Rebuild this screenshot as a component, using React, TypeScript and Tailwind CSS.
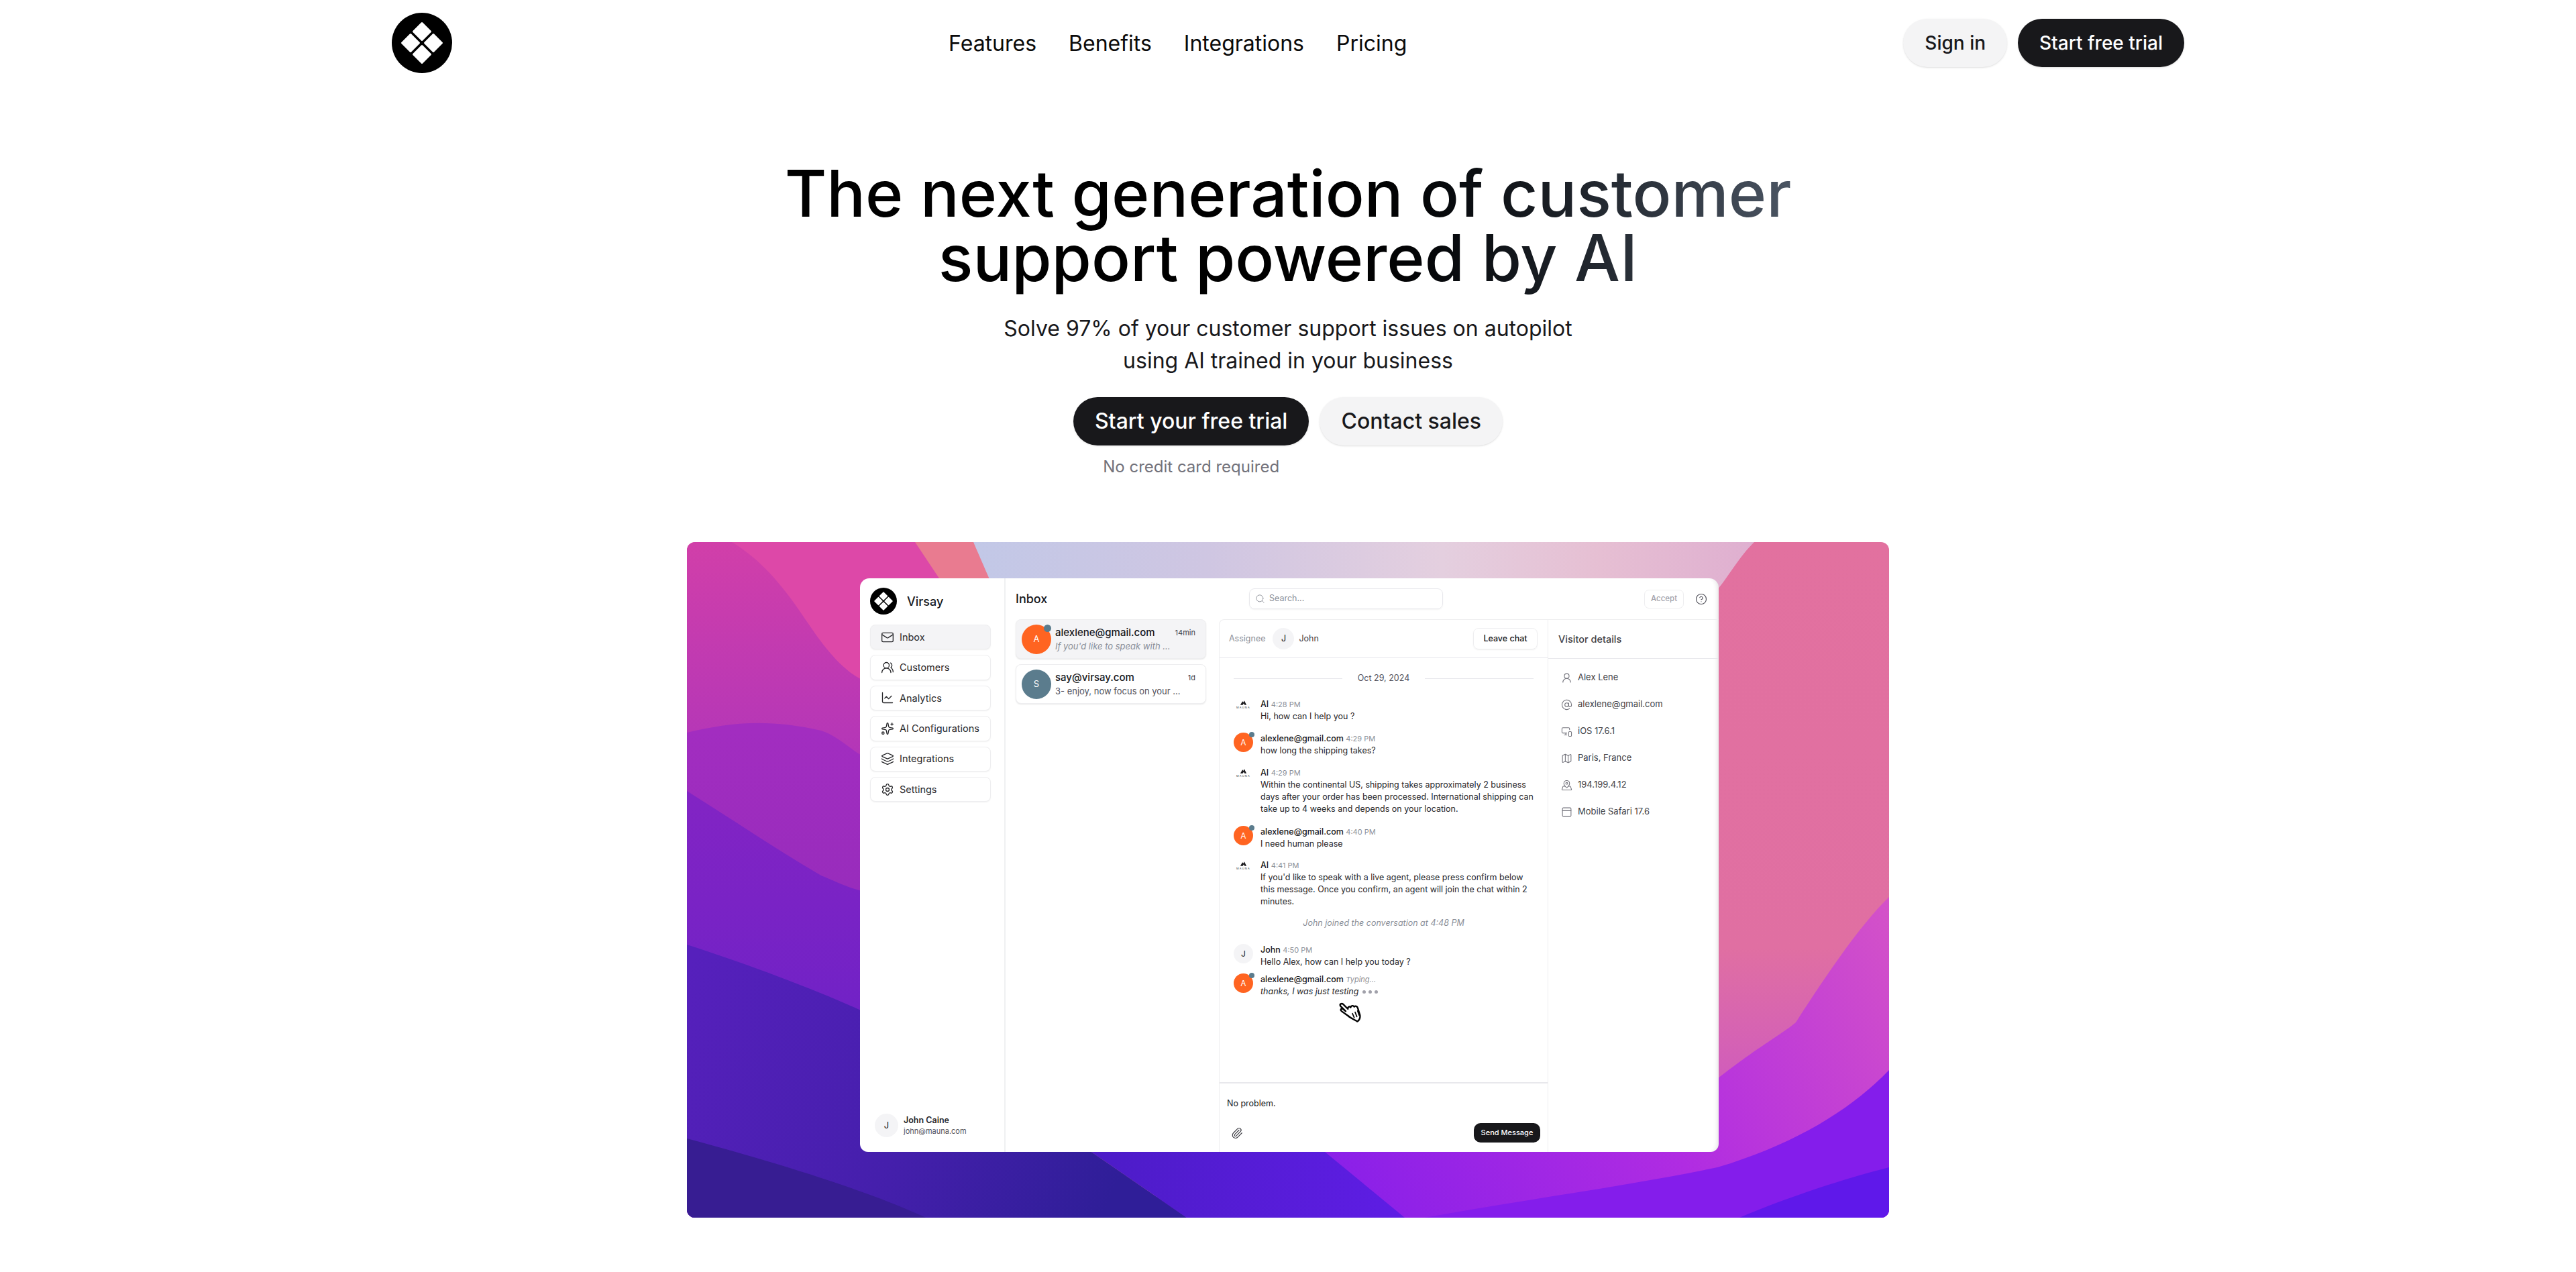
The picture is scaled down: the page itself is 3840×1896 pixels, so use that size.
import {
  AtSign,
  ChartLine,
  CircleHelp,
  Layers,
  Mail,
  Map,
  MapPinned,
  MonitorSmartphone,
  PanelTop,
  Paperclip,
  Search,
  Settings,
  Sparkles,
  UserRound,
  UsersRound,
} from 'lucide-react';
import type { ReactNode } from 'react';

function Logo({ className }: { className: string }) {
  return (
    <svg viewBox="0 0 90 90" className={className}>
      <circle cx="45" cy="45" r="45" fill="#000" />
      <g fill="#fff" stroke="#fff" strokeWidth="3" strokeLinejoin="round">
        <polygon points="45,15.5 57.5,28 45,40.5 32.5,28" />
        <polygon points="45,49.5 57.5,62 45,74.5 32.5,62" />
        <polygon points="28,32.5 40.5,45 28,57.5 15.5,45" />
        <polygon points="62,32.5 74.5,45 62,57.5 49.5,45" />
      </g>
    </svg>
  );
}

function HandCursor({ className }: { className: string }) {
  return (
    <svg viewBox="0 0 150 150" className={className}>
      <path
        d="M24 58C20 50 30 45 36 50L58 72C56 62 66 58 70 65C72 56 82 55 86 62C90 56 100 60 102 68L112 100C114 112 108 122 100 128C90 122 70 112 58 102L30 82C22 76 28 66 36 72L48 82Z"
        fill="#fff"
        stroke="#000"
        strokeWidth="7"
        strokeLinejoin="round"
      />
      <path d="M78 92L86 110M90 86L98 106M101 80L108 100" stroke="#000" strokeWidth="5" strokeLinecap="round" />
    </svg>
  );
}

function Wallpaper() {
  return (
    <svg viewBox="0 0 1792 1007" preserveAspectRatio="none" className="absolute inset-0 h-full w-full">
      <defs>
        <linearGradient id="pink" x1="0" y1="0" x2="0" y2="1">
          <stop offset="0" stopColor="#e2719f" />
          <stop offset="0.6" stopColor="#e06fa2" />
          <stop offset="0.8" stopColor="#d05cbc" />
        </linearGradient>
        <linearGradient id="sky" gradientUnits="userSpaceOnUse" x1="427" y1="0" x2="1591" y2="0">
          <stop offset="0" stopColor="#c2c8e7" />
          <stop offset="0.3" stopColor="#cfc6e2" />
          <stop offset="0.6" stopColor="#e4cfdf" />
          <stop offset="0.8" stopColor="#e6bfd3" />
          <stop offset="1" stopColor="#dfafd0" />
        </linearGradient>
        <linearGradient id="l1" gradientUnits="userSpaceOnUse" x1="0" y1="0" x2="0" y2="320">
          <stop offset="0" stopColor="#d13fa9" />
          <stop offset="1" stopColor="#b336b8" />
        </linearGradient>
        <linearGradient id="l2" gradientUnits="userSpaceOnUse" x1="0" y1="280" x2="0" y2="520">
          <stop offset="0" stopColor="#a22dc0" />
          <stop offset="1" stopColor="#982cbc" />
        </linearGradient>
        <linearGradient id="l3" gradientUnits="userSpaceOnUse" x1="0" y1="380" x2="0" y2="700">
          <stop offset="0" stopColor="#8224c4" />
          <stop offset="1" stopColor="#7122c6" />
        </linearGradient>
        <linearGradient id="l4" gradientUnits="userSpaceOnUse" x1="0" y1="640" x2="640" y2="960">
          <stop offset="0" stopColor="#5620bc" />
          <stop offset="0.55" stopColor="#451fac" />
          <stop offset="1" stopColor="#2f1e98" />
        </linearGradient>
        <linearGradient id="r1" gradientUnits="userSpaceOnUse" x1="1000" y1="1000" x2="1792" y2="540">
          <stop offset="0" stopColor="#8a20e8" />
          <stop offset="0.5" stopColor="#b02ce2" />
          <stop offset="1" stopColor="#d452c8" />
        </linearGradient>
        <linearGradient id="mid" gradientUnits="userSpaceOnUse" x1="620" y1="0" x2="1060" y2="0">
          <stop offset="0" stopColor="#4d1cc8" />
          <stop offset="1" stopColor="#5e1de4" />
        </linearGradient>
      </defs>
      <rect width="1792" height="1007" fill="url(#pink)" />
      <path d="M427 0H1591C1570 20 1550 55 1536 71V120H453Z" fill="url(#sky)" />
      <path d="M332 0H427L453 60V120H397Z" fill="#e97b90" />
      <path d="M60 0H340L400 90V300H257Z" fill="#dd48a8" />
      {/* right side layers */}
      <path d="M1792 529C1760 560 1719 613 1653 716C1630 735 1603 748 1536 800H700V1007H1792Z" fill="url(#r1)" />
      <path d="M1792 787C1736 845 1653 897 1536 932C1400 960 1250 980 1100 1007H1792Z" fill="#841deb" />
      <path d="M1792 932C1703 955 1620 985 1569 1007H1792Z" fill="#5f18ea" />
      <path d="M603 909H951L1070 1007H745Z" fill="url(#mid)" />
      {/* left side layers */}
      <path d="M0 0H67C100 20 133 50 173 110C200 150 225 185 257 203L320 240V1007H0Z" fill="url(#l1)" />
      <path d="M0 284C60 270 117 262 200 281C220 287 240 305 257 316L330 350V1007H0Z" fill="url(#l2)" />
      <path d="M0 371C67 413 133 458 200 497C220 505 240 515 257 519L350 545V1007H0Z" fill="url(#l3)" />
      <path d="M0 600C100 632 200 671 257 697L500 800L603 909L745 1007H0Z" fill="url(#l4)" />
      <path d="M0 889C100 916 257 961 356 1007H0Z" fill="#371d92" />
    </svg>
  );
}

const navItems = [
  { label: 'Inbox', icon: <Mail className="h-[20px] w-[20px]" strokeWidth={1.6} />, active: true },
  { label: 'Customers', icon: <UsersRound className="h-[20px] w-[20px]" strokeWidth={1.6} /> },
  { label: 'Analytics', icon: <ChartLine className="h-[20px] w-[20px]" strokeWidth={1.6} /> },
  { label: 'AI Configurations', icon: <Sparkles className="h-[20px] w-[20px]" strokeWidth={1.6} /> },
  { label: 'Integrations', icon: <Layers className="h-[20px] w-[20px]" strokeWidth={1.6} /> },
  { label: 'Settings', icon: <Settings className="h-[20px] w-[20px]" strokeWidth={1.6} /> },
];

const visitorRows = [
  { label: 'Alex Lene', icon: <UserRound className="h-[17px] w-[17px]" strokeWidth={1.5} /> },
  { label: 'alexlene@gmail.com', icon: <AtSign className="h-[17px] w-[17px]" strokeWidth={1.5} /> },
  { label: 'iOS 17.6.1', icon: <MonitorSmartphone className="h-[17px] w-[17px]" strokeWidth={1.5} /> },
  { label: 'Paris, France', icon: <Map className="h-[17px] w-[17px]" strokeWidth={1.5} /> },
  { label: '194.199.4.12', icon: <MapPinned className="h-[17px] w-[17px]" strokeWidth={1.5} /> },
  { label: 'Mobile Safari 17.6', icon: <PanelTop className="h-[17px] w-[17px]" strokeWidth={1.5} /> },
];

function OrangeAvatar() {
  return (
    <div className="relative flex h-[29px] w-[29px] shrink-0 items-center justify-center rounded-full bg-[#ff6421] text-[12px] text-white">
      A
      <span className="absolute -top-[1px] right-[-2px] h-[8px] w-[8px] rounded-full bg-[#5b7c8d]" />
    </div>
  );
}

function MaunaMark() {
  return (
    <div className="flex h-[29px] w-[29px] shrink-0 flex-col items-center pt-[2px]">
      <svg viewBox="0 0 12 8" className="h-[8px] w-[11px]">
        <path d="M1 8L4.5 2L6 4L7.5 1L11 8H8L6.5 5.5L5 8Z" fill="#1a1a1e" />
      </svg>
      <span className="mt-[1px] text-[4px] leading-[5px] tracking-[1.2px] text-[#333]">MAUNA</span>
    </div>
  );
}

function Message({
  avatar,
  name,
  time,
  children,
  className,
}: {
  avatar: ReactNode;
  name: string;
  time: ReactNode;
  children: ReactNode;
  className: string;
}) {
  return (
    <div className={`flex gap-[11px] ${className}`}>
      {avatar}
      <div className="text-[12.5px] leading-[18px] text-[#27272a]">
        <div>
          <span className="font-medium text-[#18181b]">{name}</span>{' '}
          <span className="text-[11px] text-[#8b8f98]">{time}</span>
        </div>
        {children}
      </div>
    </div>
  );
}

function AppWindow() {
  return (
    <div className="flex h-[855px] w-[1280px] overflow-hidden rounded-t-[14px] rounded-b-[12px] bg-white text-[#18181b] shadow-[inset_-7px_0_7px_-6px_rgba(0,0,0,0.14)]">
      <aside className="flex w-[217px] shrink-0 flex-col border-r-2 border-[#eff0f2] pb-[22px] pl-[15px] pr-[20px] pt-[14px]">
        <div className="flex items-center gap-[15px]">
          <Logo className="h-[40px] w-[40px]" />
          <span className="text-[18px] font-medium">Virsay</span>
        </div>
        <nav className="mt-[15px] flex flex-col gap-[8px]">
          {navItems.map((item) => (
            <div
              key={item.label}
              className={`flex h-[37.4px] items-center gap-[8px] rounded-[8px] border border-[#eeeef0] pl-[15px] text-[14.5px] text-[#27272a] shadow-[0_1px_2px_rgba(0,0,0,0.06)] ${item.active ? 'bg-[#f4f4f6]' : 'bg-white'}`}
            >
              {item.icon}
              {item.label}
            </div>
          ))}
        </nav>
        <div className="mt-auto flex items-center gap-[8px] pl-[7px]">
          <div className="flex h-[35px] w-[35px] items-center justify-center rounded-full bg-[#f4f4f6] text-[13px]">J</div>
          <div>
            <div className="text-[12.5px] font-semibold leading-[16px] text-[#27272a]">John Caine</div>
            <div className="text-[11px] leading-[16px] text-[#52525b]">john@mauna.com</div>
          </div>
        </div>
      </aside>
      <div className="flex min-w-0 flex-1 flex-col">
        <div className="flex h-[61px] shrink-0 items-center pl-[15px] pr-[17px]">
          <div className="w-[348px] text-[18px] font-medium">Inbox</div>
          <div className="flex h-[31px] w-[289px] items-center gap-[6px] rounded-[8px] border border-[#e8e8ec] pl-[8px] text-[12.5px] text-[#8b8f98] shadow-[0_1px_2px_rgba(0,0,0,0.05)]">
            <Search className="h-[15px] w-[15px]" strokeWidth={1.5} />
            Search...
          </div>
          <div className="ml-auto flex h-[28px] w-[59px] items-center justify-center rounded-[7px] border border-[#eeeef0] text-[11.5px] font-medium text-[#a1a1aa]">
            Accept
          </div>
          <CircleHelp className="ml-[17px] h-[18px] w-[18px] text-[#52525b]" strokeWidth={1.6} />
        </div>
        <div className="flex min-h-0 flex-1">
          <div className="flex w-[318px] shrink-0 flex-col gap-[8px] pl-[15px] pr-[19px]">
            <div className="flex h-[59px] items-center gap-[6px] rounded-[8px] border border-[#eeeef0] bg-[#f4f4f6] pl-[8px] pr-[15px] shadow-[0_1px_2px_rgba(0,0,0,0.1)]">
              <div className="relative flex h-[44px] w-[44px] shrink-0 items-center justify-center rounded-full bg-[#ff6421] text-[13px] text-white">
                A
                <span className="absolute right-0 top-0 h-[11px] w-[11px] rounded-full bg-[#5b7c8d]" />
              </div>
              <div className="min-w-0 flex-1">
                <div className="flex items-center justify-between text-[15px] font-medium leading-[20px]">
                  alexlene@gmail.com
                  <span className="text-[11px] font-normal text-[#3f3f46]">14min</span>
                </div>
                <div className="text-[13px] italic leading-[20px] text-[#8b8f98]">If you'd like to speak with ...</div>
              </div>
            </div>
            <div className="flex h-[59px] items-center gap-[6px] rounded-[8px] border border-[#eeeef0] bg-white pl-[8px] pr-[15px] shadow-[0_1px_2px_rgba(0,0,0,0.1)]">
              <div className="flex h-[44px] w-[44px] shrink-0 items-center justify-center rounded-full bg-[#5b7c8d] text-[13px] text-white">S</div>
              <div className="min-w-0 flex-1">
                <div className="flex items-center justify-between text-[15px] font-medium leading-[20px]">
                  say@virsay.com
                  <span className="text-[11px] font-normal text-[#3f3f46]">1d</span>
                </div>
                <div className="text-[13px] leading-[20px] text-[#52525b]">3- enjoy, now focus on your ...</div>
              </div>
            </div>
          </div>
          <section className="flex w-[490px] shrink-0 flex-col rounded-tl-[8px] border-l border-t border-[#eeeef0]">
            <div className="flex h-[57px] shrink-0 items-center border-b border-[#e8e8ec] pl-[14px] pr-[15px] text-[12.5px]">
              <span className="text-[#8b8f98]">Assignee</span>
              <div className="ml-[11px] flex h-[32px] w-[32px] items-center justify-center rounded-full bg-[#f4f4f6]">J</div>
              <span className="ml-[7px] text-[#3f3f46]">John</span>
              <div className="ml-auto flex h-[32px] w-[96px] items-center justify-center rounded-[8px] border border-[#eeeef0] font-medium shadow-[0_1px_2px_rgba(0,0,0,0.06)]">
                Leave chat
              </div>
            </div>
            <div className="min-h-0 flex-1 px-[21px] pt-[21px]">
              <div className="flex items-center gap-[23px] text-[12.5px] leading-[18px] text-[#52525b]">
                <span className="h-px flex-1 bg-[#e8e8ec]" />
                Oct 29, 2024
                <span className="h-px flex-1 bg-[#e8e8ec]" />
              </div>
              <Message className="mt-[21px]" avatar={<MaunaMark />} name="AI" time="4:28 PM">
                Hi, how can I help you ?
              </Message>
              <Message className="mt-[15px]" avatar={<OrangeAvatar />} name="alexlene@gmail.com" time="4:29 PM">
                how long the shipping takes?
              </Message>
              <Message className="mt-[15px]" avatar={<MaunaMark />} name="AI" time="4:29 PM">
                Within the continental US, shipping takes approximately 2 business days after your order has been processed. International shipping can take up to 4 weeks and depends on your location.
              </Message>
              <Message className="mt-[16px]" avatar={<OrangeAvatar />} name="alexlene@gmail.com" time="4:40 PM">
                I need human please
              </Message>
              <Message className="mt-[14px]" avatar={<MaunaMark />} name="AI" time="4:41 PM">
                If you'd like to speak with a live agent, please press confirm below this message. Once you confirm, an agent will join the chat within 2 minutes.
              </Message>
              <div className="mt-[14px] text-center text-[12.5px] italic leading-[18px] text-[#8b8f98]">
                John joined the conversation at 4:48 PM
              </div>
              <Message
                className="mt-[22px]"
                avatar={<div className="flex h-[29px] w-[29px] shrink-0 items-center justify-center rounded-full bg-[#f4f4f6] text-[12px]">J</div>}
                name="John"
                time="4:50 PM"
              >
                Hello Alex, how can I help you today ?
              </Message>
              <Message
                className="mt-[8px]"
                avatar={<OrangeAvatar />}
                name="alexlene@gmail.com"
                time={<i>Typing...</i>}
              >
                <div className="relative flex items-center gap-[6px] italic">
                  thanks, I was just testing
                  <span className="flex gap-[4px]">
                    <span className="h-[5px] w-[5px] rounded-full bg-[#a1a1aa]" />
                    <span className="h-[5px] w-[5px] rounded-full bg-[#a1a1aa]" />
                    <span className="h-[5px] w-[5px] rounded-full bg-[#a1a1aa]" />
                  </span>
                  <HandCursor className="absolute left-[111px] top-[11px] h-[50px] w-[50px]" />
                </div>
              </Message>
            </div>
            <div className="flex h-[104px] shrink-0 flex-col border-t-2 border-[#e8e8ec] pb-[14px] pl-[11px] pr-[11px] pt-[21px] text-[12.5px]">
              <span className="leading-[18px]">No problem.</span>
              <div className="mt-auto flex items-center justify-between">
                <Paperclip className="ml-[6px] h-[18px] w-[18px] text-[#3f3f46]" strokeWidth={1.6} />
                <div className="flex h-[29px] w-[99px] items-center justify-center rounded-[10px] bg-[#18181b] text-[11px] font-medium text-white">
                  Send Message
                </div>
              </div>
            </div>
          </section>
          <section className="flex-1 border-l border-t border-[#eeeef0]">
            <div className="flex h-[58px] items-center border-b border-[#e8e8ec] pl-[15px] text-[14.5px] font-medium text-[#3f3f46]">
              Visitor details
            </div>
            <div className="flex flex-col gap-[22px] pl-[19px] pt-[19px]">
              {visitorRows.map((row) => (
                <div key={row.label} className="flex h-[18px] items-center gap-[8px] text-[13px] text-[#3f3f46]">
                  <span className="text-[#71717a]">{row.icon}</span>
                  {row.label}
                </div>
              ))}
            </div>
          </section>
        </div>
      </div>
    </div>
  );
}

export default function App() {
  return (
    <div className="h-[1896px] overflow-hidden bg-white font-['Inter',sans-serif] text-[#0a0a0a]">
      <header className="mx-auto flex h-[128px] w-[2672px] items-center justify-between">
        <Logo className="h-[90px] w-[90px]" />
        <nav className="flex gap-[48px] pt-[2px] text-[32px] leading-[48px] text-[#0a0a0a]">
          <a>Features</a>
          <a>Benefits</a>
          <a>Integrations</a>
          <a>Pricing</a>
        </nav>
        <div className="flex gap-[16px] text-[28px] font-medium">
          <button className="h-[72px] rounded-full bg-[#f4f4f5] px-[32px] text-[#18181b] shadow-sm">Sign in</button>
          <button className="h-[72px] rounded-full bg-[#18181b] px-[32px] text-white shadow-sm">Start free trial</button>
        </div>
      </header>
      <main className="flex flex-col items-center">
        <h1 className="mt-[112px] bg-linear-to-r from-black from-50% to-[#4b5563] bg-clip-text pb-[16px] text-center text-[96px] font-medium leading-[96px] text-transparent">
          The next generation of customer
          <br />
          support powered by AI
        </h1>
        <p className="mt-[18px] text-center text-[32px] leading-[48px] text-[#18181b]">
          Solve 97% of your customer support issues on autopilot
          <br />
          using AI trained in your business
        </p>
        <div className="mt-[30px] flex items-start gap-[16px]">
          <div className="flex flex-col items-center">
            <button className="h-[72px] rounded-full bg-[#18181b] px-[32px] text-[32px] font-medium text-white shadow-sm">
              Start your free trial
            </button>
            <span className="mt-[12px] text-[24px] leading-[40px] text-[#71717a]">No credit card required</span>
          </div>
          <button className="h-[72px] rounded-full bg-[#f4f4f5] px-[32px] text-[32px] font-medium text-[#18181b] shadow-sm">
            Contact sales
          </button>
        </div>
        <div className="relative mt-[92px] h-[1007px] w-[1792px] overflow-hidden rounded-[12px] pl-[258px] pt-[54px]">
          <Wallpaper />
          <div className="relative">
            <AppWindow />
          </div>
        </div>
      </main>
    </div>
  );
}
